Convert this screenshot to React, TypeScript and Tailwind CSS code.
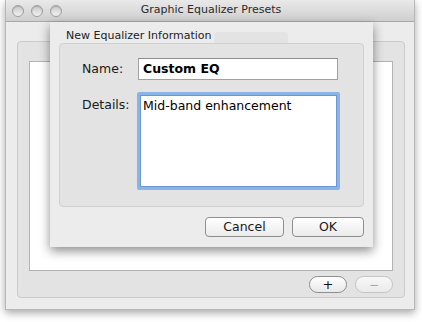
import React from 'react';

const font = { fontFamily: '"DejaVu Sans", "Liberation Sans", sans-serif' };

function TrafficLight() {
  return (
    <span className="block w-[12px] h-[12px] rounded-full border border-[#9e9e9e] bg-gradient-to-b from-[#c9c9c9] to-[#f2f2f2] shadow-[inset_0_1px_1px_rgba(0,0,0,0.15)]" />
  );
}

export default function App() {
  return (
    <div className="w-[422px] h-[322px] bg-white pt-0" style={font}>
      {/* Main window */}
      <div className="relative ml-[5px] w-[410px] h-[310px] bg-[#ececec] border-x border-b border-[#b8b8b8] shadow-[0_3px_8px_rgba(0,0,0,0.35)]">
        {/* Title bar */}
        <div className="relative h-[22px] flex items-center bg-gradient-to-b from-[#e9e9e9] to-[#cfcfcf] border-b border-[#a8a8a8] rounded-t-[4px]">
          <div className="flex gap-[7px] pl-[6px]">
            <TrafficLight />
            <TrafficLight />
            <TrafficLight />
          </div>
          <div className="absolute inset-0 flex items-center justify-center pl-[2px] text-[11px] text-[#2a2a2a]">
            Graphic Equalizer Presets
          </div>
        </div>

        {/* Group box */}
        <div className="mt-[19px] ml-[11px] w-[388px] h-[257px] rounded-[4px] border border-[#cbcbcb] bg-[#e3e3e3] flex flex-col px-[11px] pt-[19px]">
          <div className="h-[210px] bg-white border border-[#b3b3b3]" />
          <div className="flex justify-end gap-[8px] mt-[5px]">
            <button className="w-[38px] h-[17px] rounded-full border border-[#8e8e8e] bg-gradient-to-b from-[#ffffff] to-[#e8e8e8] text-[13px] leading-none text-[#111] flex items-center justify-center">
              +
            </button>
            <button className="w-[38px] h-[17px] rounded-full border border-[#c4c4c4] bg-gradient-to-b from-[#f7f7f7] to-[#eaeaea] text-[12px] leading-none text-[#a8a8a8] flex items-center justify-center">
              −
            </button>
          </div>
        </div>

        {/* Sheet */}
        <div className="absolute left-[44px] top-[22px] w-[323px] h-[225px] bg-[#ececec] shadow-[0_4px_10px_rgba(0,0,0,0.45)] px-[9px] flex flex-col">
          {/* faint segmented control seen through the sheet */}
          <div className="absolute left-[164px] top-[10px] w-[74px] h-[18px] rounded-[3px] bg-[#dedede] opacity-60" />
          <div className="relative pl-[7px] pt-[7px] h-[21px] text-[11px] leading-[14px] text-[#222]">
            New Equalizer Information
          </div>
          <div className="relative h-[164px] rounded-[4px] border border-[#d0d0d0] bg-[#e3e3e3] pt-[14px] pl-[22px]">
            <div className="flex items-center">
              <span className="w-[56px] text-[12.5px] text-[#1a1a1a]">Name:</span>
              <div className="w-[200px] h-[22px] bg-white border border-[#a0a0a0] border-t-[#8c8c8c] flex items-center px-[4px] text-[12.5px] font-bold text-black">
                Custom EQ
              </div>
            </div>
            <div className="flex mt-[12px]">
              <span className="w-[55px] pt-[4px] text-[12.5px] text-[#1a1a1a]">Details:</span>
              <div className="w-[203px] h-[98px] rounded-[2px] bg-white border-[3px] border-[#8bb3e6] shadow-[inset_0_0_0_1px_#6b98d4] px-[3px] pt-[2px] text-[12.5px] text-black">
                Mid-band enhancement
              </div>
            </div>
          </div>
          <div className="flex justify-end gap-[8px] mt-[10px]">
            <button className="w-[79px] h-[20px] rounded-[4px] border border-[#8f8f8f] bg-gradient-to-b from-[#ffffff] to-[#ebebeb] text-[12.5px] leading-none text-[#1a1a1a]">
              Cancel
            </button>
            <button className="w-[72px] h-[20px] rounded-[4px] border border-[#8f8f8f] bg-gradient-to-b from-[#ffffff] to-[#ebebeb] text-[12.5px] leading-none text-[#1a1a1a]">
              OK
            </button>
          </div>
        </div>
      </div>
    </div>
  );
}
